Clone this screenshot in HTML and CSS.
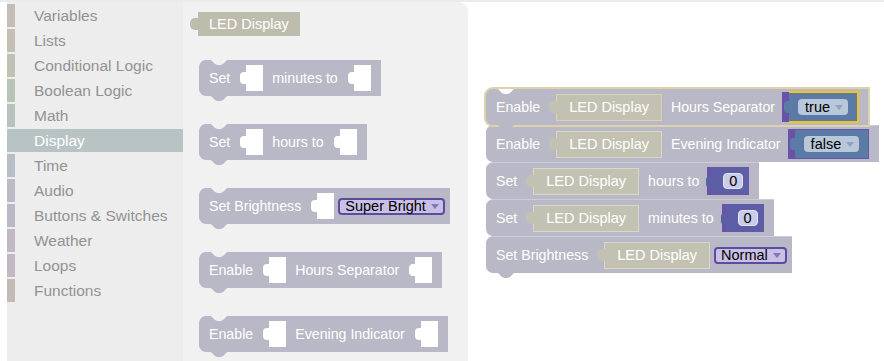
FILE: index.html
```html
<!DOCTYPE html>
<html lang="en">
<head>
    <meta charset="UTF-8">
    <title>Blocks - Display</title>
    <link rel="stylesheet" href="styles.css">
</head>
<body>
    <div class="app">
        <aside class="toolbox">
            <div class="cat"><span class="swatch" style="background:#c5bcb8"></span>Variables</div>
            <div class="cat"><span class="swatch" style="background:#c3c0b3"></span>Lists</div>
            <div class="cat"><span class="swatch" style="background:#c0c2b3"></span>Conditional Logic</div>
            <div class="cat"><span class="swatch" style="background:#b9c3b5"></span>Boolean Logic</div>
            <div class="cat"><span class="swatch" style="background:#b6c3bc"></span>Math</div>
            <div class="cat selected"><span class="swatch"></span>Display</div>
            <div class="cat"><span class="swatch" style="background:#b9bdc7"></span>Time</div>
            <div class="cat"><span class="swatch" style="background:#b9bbc7"></span>Audio</div>
            <div class="cat"><span class="swatch" style="background:#bab9c8"></span>Buttons &amp; Switches</div>
            <div class="cat"><span class="swatch" style="background:#c1b8c6"></span>Weather</div>
            <div class="cat"><span class="swatch" style="background:#c3b7c2"></span>Loops</div>
            <div class="cat"><span class="swatch" style="background:#c4b9b6"></span>Functions</div>
        </aside>

        <section class="flyout">
            <div class="value led">LED Display</div>
            <div class="block stmt">
                <span class="label">Set</span><span class="socket"></span>
                <span class="label">minutes to</span><span class="socket"></span>
            </div>
            <div class="block stmt">
                <span class="label">Set</span><span class="socket"></span>
                <span class="label">hours to</span><span class="socket"></span>
            </div>
            <div class="block stmt">
                <span class="label">Set Brightness</span><span class="socket"></span>
                <span class="dd">Super Bright<i class="arrow"></i></span>
            </div>
            <div class="block stmt">
                <span class="label">Enable</span><span class="socket"></span>
                <span class="label">Hours Separator</span><span class="socket"></span>
            </div>
            <div class="block stmt">
                <span class="label">Enable</span><span class="socket"></span>
                <span class="label">Evening Indicator</span><span class="socket"></span>
            </div>
        </section>

        <main class="workspace">
            <div class="stack">
                <div class="block stmt active">
                    <span class="label">Enable</span>
                    <span class="value">LED Display</span>
                    <span class="label">Hours Separator</span>
                    <span class="bool picked"><span class="dd blue">true<i class="arrow"></i></span></span>
                </div>
                <div class="block stmt">
                    <span class="label">Enable</span>
                    <span class="value">LED Display</span>
                    <span class="label">Evening Indicator</span>
                    <span class="bool"><span class="dd blue">false<i class="arrow"></i></span></span>
                </div>
                <div class="block stmt">
                    <span class="label">Set</span>
                    <span class="value">LED Display</span>
                    <span class="label">hours to</span>
                    <span class="num"><span class="numfield">0</span></span>
                </div>
                <div class="block stmt">
                    <span class="label">Set</span>
                    <span class="value">LED Display</span>
                    <span class="label">minutes to</span>
                    <span class="num"><span class="numfield">0</span></span>
                </div>
                <div class="block stmt">
                    <span class="label">Set Brightness</span>
                    <span class="value">LED Display</span>
                    <span class="dd">Normal<i class="arrow"></i></span>
                </div>
            </div>
        </main>
    </div>
</body>
</html>
```

FILE: styles.css
```css
html, body {
    margin: 0;
    padding: 0;
}
body {
    font-family: "Liberation Sans", Arial, Helvetica, sans-serif;
    background-color: #fff;
}
.app {
    display: flex;
    height: 361px;
    border-top: 2px solid #ebebeb;
    box-sizing: border-box;
    padding-left: 7px;
}

/* category list */
.toolbox {
    width: 176px;
    background-color: #ededed;
    padding-top: 2px;
}
.cat {
    display: flex;
    align-items: center;
    height: 23px;
    margin-bottom: 2px;
    color: #929292;
    font-size: 15.5px;
}
.swatch {
    width: 8px;
    align-self: stretch;
    margin-right: 19px;
}
.cat.selected {
    background-color: #b8c4c4;
    color: #fff;
}

/* flyout with the block palette */
.flyout {
    width: 285px;
    background-color: #f1f1f1;
    border-top-right-radius: 9px;
    display: flex;
    flex-direction: column;
    align-items: flex-start;
    padding: 10px 0 0 16px;
    box-sizing: border-box;
    overflow: hidden;
    --notch: #f1f1f1;
}
.flyout > * {
    flex-shrink: 0;
}
.flyout .block {
    margin-bottom: 28px;
}
.flyout .led {
    height: 24px;
    margin: 0 0 24px -1px;
    padding: 0 11px;
    background-color: #bebdad;
    border: none;
    font-size: 14.5px;
}

/* blocks */
.block {
    position: relative;
    display: flex;
    align-items: center;
    height: 36px;
    padding: 0 10px;
    background-color: #b9b8c6;
    border-radius: 7px 0 0 7px;
    color: #fff;
    font-size: 14.2px;
    white-space: nowrap;
}
.stmt::before,
.stmt::after {
    content: "";
    position: absolute;
    left: 12px;
    width: 16px;
    height: 5px;
    clip-path: polygon(0 0, 100% 0, 75% 80%, 60% 100%, 40% 100%, 25% 80%);
}
.stmt::before {
    top: 0;
    background: var(--notch);
}
.stmt::after {
    bottom: -5px;
    background: inherit;
}
.socket {
    position: relative;
    width: 17px;
    height: 26px;
    background-color: #fff;
}
.socket::before {
    content: "";
    position: absolute;
    left: -6px;
    top: 7px;
    width: 6px;
    height: 12px;
    background-color: #fff;
    border-radius: 4px 0 0 4px;
}
.value {
    position: relative;
    display: flex;
    align-items: center;
    height: 27px;
    padding: 0 12px;
    box-sizing: border-box;
    background-color: #c3c2b2;
    border: 1px solid #d8d7ca;
    color: #fff;
    font-size: 14.5px;
}
.value::before {
    content: "";
    position: absolute;
    left: -8px;
    top: 6px;
    width: 8px;
    height: 12px;
    background: inherit;
    border-radius: 5px 0 0 5px;
}
.label + .socket,
.label + .value {
    margin-left: 16px;
}
.socket + .label,
.value + .label {
    margin-left: 9px;
}
.socket + .dd,
.value + .dd {
    margin-left: 4px;
}

/* dropdown fields */
.dd {
    display: flex;
    align-items: center;
    height: 17px;
    padding: 0 4px 0 5px;
    box-sizing: border-box;
    border: 2px solid #5f4aa1;
    border-radius: 4px;
    background-color: #c8c0e5;
    color: #000;
    font-size: 14.5px;
}
.block > .dd:last-child {
    margin-right: -5px;
}
.arrow {
    width: 0;
    height: 0;
    margin-left: 5px;
    border-left: 4px solid transparent;
    border-right: 4px solid transparent;
    border-top: 5px solid #8178b9;
}
.dd.blue {
    height: 16px;
    border: none;
    padding: 0 5px 0 7px;
    background-color: #b8c7da;
}
.dd.blue .arrow {
    border-top-color: #8ea4c4;
}

/* boolean and number blocks plugged in */
.bool,
.num {
    position: relative;
    display: flex;
    align-items: center;
    height: 30px;
    padding: 0 9px;
    box-sizing: border-box;
    background-color: #5b7ba6;
    border: 1px solid #6b55a8;
    border-left: none;
}
.bool::before,
.num::before {
    content: "";
    position: absolute;
    top: -1px;
    bottom: -1px;
    left: -7px;
    width: 7px;
    background-color: #6b52a9;
}
.bool::after,
.num::after {
    content: "";
    position: absolute;
    left: -5px;
    top: 8px;
    width: 6px;
    height: 12px;
    background: inherit;
    border-radius: 4px 0 0 4px;
}
.label + .bool {
    margin-left: 14px;
}
.bool.picked {
    border-color: #f2c31b;
    box-shadow: 0 0 0 1px #f2c31b;
}
.num {
    height: 28px;
    padding: 0 5px 0 12px;
    background-color: #5c5ea6;
}
.num::before {
    left: -4px;
    width: 4px;
}
.label + .num {
    margin-left: 12px;
}
.numfield {
    display: flex;
    align-items: center;
    height: 16px;
    padding: 0 5px;
    box-sizing: border-box;
    background-color: #c9cbe9;
    border: 1px solid #e3e4f4;
    border-radius: 4px;
    color: #000;
    font-size: 14.5px;
}

/* workspace canvas */
.workspace {
    flex: 1;
    padding: 87px 0 0 18px;
    --notch: #fff;
}
.stack {
    display: flex;
    flex-direction: column;
    align-items: flex-start;
}
.stack .block + .block {
    border-top: 1px solid #cccbd7;
}
.stack .block + .block::before {
    display: none;
}
.block.active {
    z-index: 1;
    box-shadow: 0 0 0 2px #dcd3ad;
}
.block.active .value {
    border-color: #dcd3ad;
}
```
